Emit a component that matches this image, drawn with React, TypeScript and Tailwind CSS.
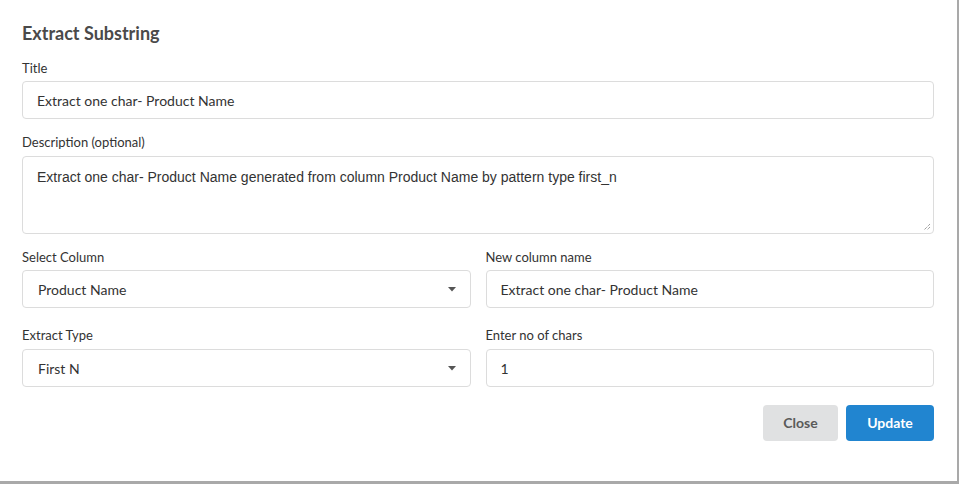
import React from 'react'

const lato = { fontFamily: 'Lato, "Open Sans", sans-serif' }

function Label({ children, className = '' }: { children: React.ReactNode; className?: string }) {
  return <div className={`text-[13px] leading-[18px] text-[#333] ${className}`}>{children}</div>
}

function TextInput({ value }: { value: string }) {
  return (
    <div className="h-[38px] flex items-center px-[14px] border border-[#dcdcdc] rounded-[4px] bg-white text-[14px] text-[#333]">
      {value}
    </div>
  )
}

function Select({ value }: { value: string }) {
  return (
    <div className="h-[38px] flex items-center justify-between pl-[15px] pr-[14px] border border-[#dcdcdc] rounded-[4px] bg-white text-[14px] text-[#333]">
      <span>{value}</span>
      <svg width="8" height="5" viewBox="0 0 8 5">
        <path d="M0 0 L8 0 L4 4.5 Z" fill="#555" />
      </svg>
    </div>
  )
}

export default function App() {
  return (
    <div className="w-[959px] h-[484px] bg-[#a9a9a9] overflow-hidden" style={lato}>
      <div className="w-[957px] h-[481px] bg-white pt-[22px] pl-[22px] pr-[23px]">
        <div className="text-[18px] leading-[22px] font-bold text-[#4a4a4a]">Extract Substring</div>

        <Label className="mt-[15px] mb-[4px]">Title</Label>
        <TextInput value="Extract one char- Product Name" />

        <Label className="mt-[14px] mb-[5px]">Description (optional)</Label>
        <div className="relative h-[78px] border border-[#dcdcdc] rounded-[4px] px-[14px] pt-[10px] text-[14px] leading-[20px] text-[#333]" style={{ fontFamily: '"Liberation Sans", Arial, sans-serif' }}>
          Extract one char- Product Name generated from column Product Name by pattern type first_n
          <svg className="absolute right-[2px] bottom-[2px]" width="8" height="8" viewBox="0 0 8 8">
            <path d="M7 1 L1 7 M7 4 L4 7" stroke="#777" strokeWidth="1" strokeDasharray="1 1" />
          </svg>
        </div>

        <div className="grid grid-cols-2 gap-x-[15px] mt-[14px]">
          <div>
            <Label className="mb-[4px]">Select Column</Label>
            <Select value="Product Name" />
          </div>
          <div>
            <Label className="mb-[4px]">New column name</Label>
            <TextInput value="Extract one char- Product Name" />
          </div>
          <div className="mt-[18px]">
            <Label className="mb-[5px]">Extract Type</Label>
            <Select value="First N" />
          </div>
          <div className="mt-[18px]">
            <Label className="mb-[5px]">Enter no of chars</Label>
            <TextInput value="1" />
          </div>
        </div>

        <div className="flex justify-end gap-[8px] mt-[18px]">
          <button className="w-[75px] h-[36px] pb-[2px] rounded-[4px] bg-[#e0e1e2] text-[14px] font-bold text-[#5a5a5a]">Close</button>
          <button className="w-[88px] h-[36px] pb-[2px] rounded-[4px] bg-[#2185d0] text-[14px] font-bold text-white">Update</button>
        </div>
      </div>
    </div>
  )
}
